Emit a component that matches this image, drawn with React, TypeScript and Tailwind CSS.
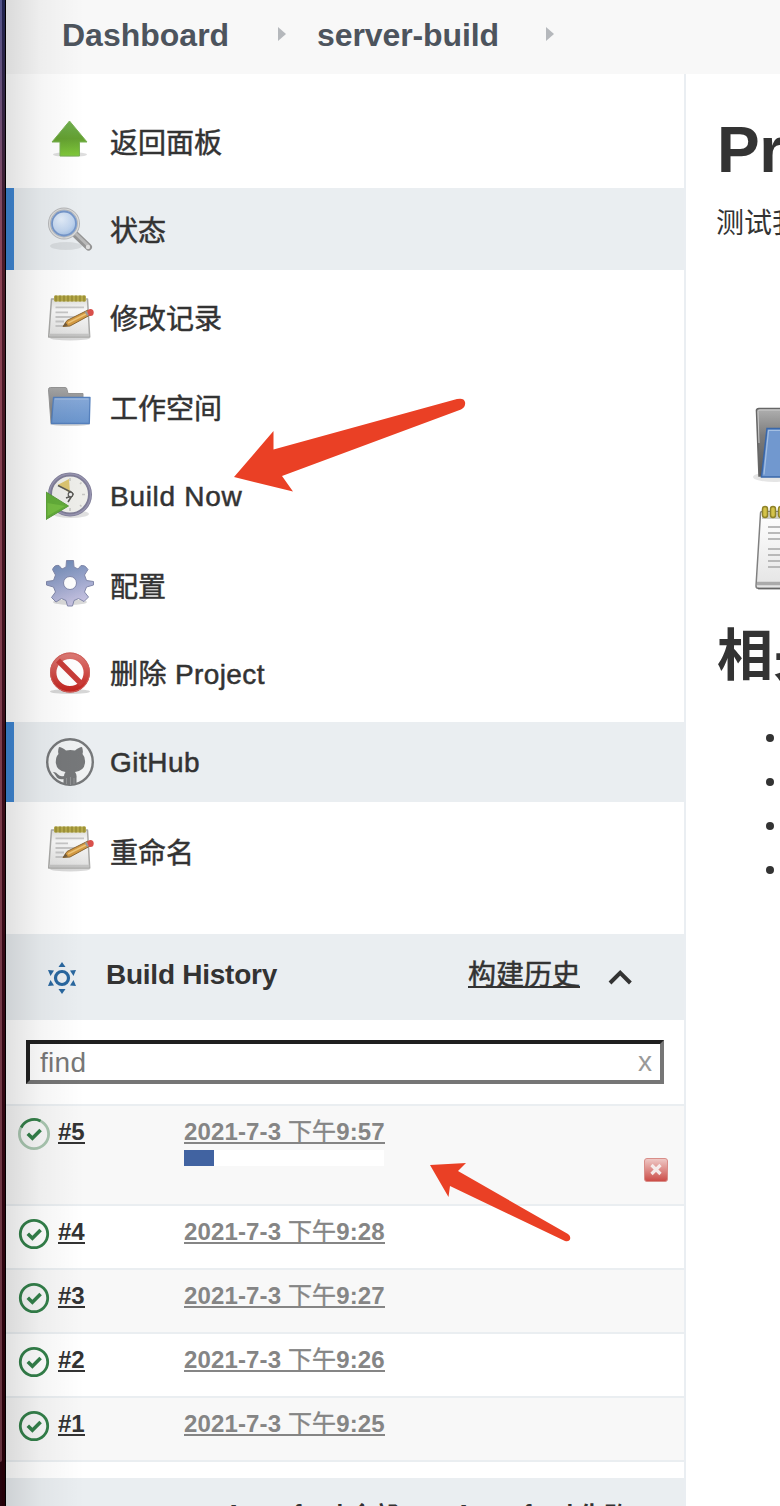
import React from "react";

const FONT = "font-['Liberation_Sans','Noto_Sans_CJK_SC',sans-serif]";

function UpArrow() {
  return (
    <svg width="48" height="48" viewBox="0 0 48 48">
      <defs>
        <linearGradient id="up" x1="0" y1="0" x2="0" y2="1">
          <stop offset="0" stopColor="#6fae50" />
          <stop offset="0.5" stopColor="#64a031" />
          <stop offset="1" stopColor="#80c93a" />
        </linearGradient>
      </defs>
      <ellipse cx="24" cy="38.500" rx="17" ry="2.6" fill="#000" opacity="0.13" />
      <path d="M23.500 5 L41 26 H33.500 V40 H14 V26 H6 Z" fill="url(#up)" stroke="#79b152" strokeWidth="1" strokeLinejoin="round" />
    </svg>
  );
}

function Search() {
  return (
    <svg width="48" height="48" viewBox="0 0 48 48">
      <defs>
        <radialGradient id="lens" cx="0.4" cy="0.35" r="0.7">
          <stop offset="0" stopColor="#e4eefa" />
          <stop offset="0.6" stopColor="#c0d4ee" />
          <stop offset="1" stopColor="#8fb2de" />
        </radialGradient>
      </defs>
      <ellipse cx="20" cy="41" rx="16" ry="4" fill="#000" opacity="0.08" />
      <path d="M30 30 L42.500 42" stroke="#949494" strokeWidth="7" strokeLinecap="round" />
      <path d="M30 29 L42 40.500" stroke="#b9b9b9" strokeWidth="3" strokeLinecap="round" />
      <circle cx="42" cy="42" r="2.200" fill="#ddd" />
      <circle cx="18" cy="18.500" r="14.500" fill="url(#lens)" stroke="#b4b5b7" strokeWidth="3" />
      <circle cx="18" cy="18.500" r="14.500" fill="none" stroke="#dcdddd" strokeWidth="1.200" />
      <circle cx="18" cy="18.500" r="12" fill="none" stroke="#7697ca" strokeWidth="1.800" />
    </svg>
  );
}

function Notepad() {
  return (
    <svg width="48" height="48" viewBox="0 0 48 48">
      <defs>
        <linearGradient id="pad" x1="0" y1="0" x2="0" y2="1">
          <stop offset="0" stopColor="#dededb" />
          <stop offset="0.3" stopColor="#f8f8f8" />
          <stop offset="1" stopColor="#dededd" />
        </linearGradient>
      </defs>
      <ellipse cx="24" cy="44" rx="20" ry="2.500" fill="#000" opacity="0.15" />
      <path d="M5.500 5 H41.500 L43.700 43 H2.700 Z" fill="url(#pad)" stroke="#a9a9a7" strokeWidth="1.500" strokeLinejoin="round" />
      <path d="M3.300 41 H43.300" stroke="#c4c4c3" strokeWidth="2.500" />
      <rect x="8" y="1.500" width="32" height="6" rx="1" fill="#b5a948" />
      <path d="M10 1.500 V7.500 M14 1.500 V7.500 M18 1.500 V7.500 M22 1.500 V7.500 M26 1.500 V7.500 M30 1.500 V7.500 M34 1.500 V7.500 M38 1.500 V7.500" stroke="#968a35" strokeWidth="1.500" />
      <path d="M9.500 13.300 H38 M9.500 18.300 H22 M9.500 23 H30 M9.500 27.500 H18 M9.500 32 H17" stroke="#c6c6c6" strokeWidth="1.800" />
      <path d="M17 32.500 L21 26.500 L42 16 L45 20.500 L24 32 Z" fill="#d49a42" stroke="#8a6634" strokeWidth="1" />
      <path d="M22 29 L43 18.500" stroke="#edc477" strokeWidth="1.500" />
      <path d="M17 32.500 L19.500 28.500 L22 31.500 Z" fill="#705c40" />
      <ellipse cx="44.500" cy="18.500" rx="3.200" ry="3.500" fill="#d9504b" />
      <path d="M39.500 17.500 L42 21.500" stroke="#999" strokeWidth="2" />
    </svg>
  );
}

function Folder() {
  return (
    <svg width="48" height="48" viewBox="0 0 48 48">
      <defs>
        <linearGradient id="folderBack" x1="0" y1="0" x2="0" y2="1">
          <stop offset="0" stopColor="#a7a7a7" />
          <stop offset="1" stopColor="#6b6d70" />
        </linearGradient>
        <linearGradient id="folderFront" x1="0" y1="0" x2="0" y2="1">
          <stop offset="0" stopColor="#86a8d7" />
          <stop offset="1" stopColor="#6a95cd" />
        </linearGradient>
      </defs>
      <ellipse cx="24" cy="41" rx="20" ry="2" fill="#000" opacity="0.15" />
      <path d="M2.500 6.500 Q2.500 4.500 4.500 4.500 H19 Q21 4.500 21 6.500 L22 10.500 H37 V40.500 H5 Z" fill="url(#folderBack)" stroke="#959595" strokeWidth="1" />
      <path d="M7.500 14.500 H44 L43.300 40.500 H5.500 Z" fill="url(#folderFront)" stroke="#5580bd" strokeWidth="1.300" strokeLinejoin="round" />
      <path d="M9 16 H42.500" stroke="#a7c0e3" strokeWidth="1" />
    </svg>
  );
}

function ClockPlay() {
  return (
    <svg width="48" height="48" viewBox="0 0 48 48">
      <ellipse cx="25" cy="42" rx="18" ry="4" fill="#000" opacity="0.12" />
      <circle cx="24" cy="22.500" r="20" fill="#eeeeea" stroke="#7f7d97" strokeWidth="4" />
      <circle cx="24" cy="22.500" r="20.500" fill="none" stroke="#9794b0" strokeWidth="1.300" />
      <path d="M24 21 L11.500 13 L23 7 Z" fill="#dcc571" />
      <path d="M12 13.500 L23 19 L25.500 24 L20 26 M24 19 L27 22 L22 30" fill="none" stroke="#5a5a56" strokeWidth="1.600" />
      <circle cx="24.500" cy="22.500" r="2.300" fill="#eee" stroke="#5a5a56" strokeWidth="1.200" />
      <path d="M24 6 V9 M39 22.500 H36 M24 39 V36 M34 12 L35.500 10.500 M34 33 L35.500 34.500" stroke="#c5c5c2" strokeWidth="1.500" />
      <path d="M0 20 L22.500 34 L0 47.500 Z" fill="#62ac39" stroke="#5a9c3c" strokeWidth="1" />
      <path d="M1.500 31 L19 34 L1.500 44 Z" fill="#74bd42" />
    </svg>
  );
}

function Gear() {
  return (
    <svg width="48" height="48" viewBox="0 0 48 48">
      <defs>
        <linearGradient id="gear" x1="0.3" y1="0" x2="0.6" y2="1">
          <stop offset="0" stopColor="#6f8ab5" />
          <stop offset="0.45" stopColor="#96a2c9" />
          <stop offset="1" stopColor="#cbc5e3" />
        </linearGradient>
      </defs>
      <ellipse cx="24" cy="42" rx="17" ry="3" fill="#000" opacity="0.15" />
      <path
        fill="url(#gear)"
        stroke="#8288aa"
        strokeWidth="1"
        fillRule="evenodd"
        strokeLinejoin="round"
        d="M20.500 0.500 H27.500 L28 7 L32 9 L35 5.500 Q39 4.500 42 9.500 L38.500 15 L40.500 20.500 L47.500 21.500 V25 L40.500 27 L38.500 32 L42.500 37 L38 41.500 L32.500 38.500 L28 40.500 L26.500 46 H21.500 L20 40.500 L15.500 38.500 L10 42 L5.500 37.500 L9.500 32 L7.500 27 L0.500 25 V21.500 L7.500 20.500 L9.500 15 L6.500 9.500 Q8.500 4.500 13 5.500 L16 9 L20 7 Z M24 16.500 A6.500 6.500 0 1 0 24 29.500 A6.500 6.500 0 1 0 24 16.500 Z"
      />
    </svg>
  );
}

function Forbidden() {
  return (
    <svg width="48" height="48" viewBox="0 0 48 48">
      <defs>
        <linearGradient id="ban" x1="0" y1="0" x2="0" y2="1">
          <stop offset="0" stopColor="#db7671" />
          <stop offset="1" stopColor="#c32722" />
        </linearGradient>
      </defs>
      <ellipse cx="24" cy="42.500" rx="20" ry="2.500" fill="#000" opacity="0.16" />
      <circle cx="24" cy="23.500" r="16.800" fill="#fff" stroke="url(#ban)" strokeWidth="6.400" />
      <path d="M12 11.500 L36 35.500" stroke="#c83c38" strokeWidth="5.500" />
      <circle cx="24" cy="23.500" r="19.500" fill="none" stroke="#cf615c" strokeWidth="1" />
    </svg>
  );
}

function Octocat() {
  return (
    <svg width="48" height="48" viewBox="0 0 48 48">
      <circle cx="24" cy="24" r="22.800" fill="#f0f2f3" stroke="#76787a" strokeWidth="2.400" />
      <path
        fill="#76787a"
        d="M13 9 Q16 9 20 12.500 Q24 11.500 29 12.500 Q33 9 36 9 Q37.500 13 36.500 16 Q39.500 19 39 25 Q38 33 29 34 Q31 36 30.500 40 V46 L24 47.500 L17.500 46 V41 Q12 42 10 38 Q8.500 35.500 7 34 Q10 33.500 12 36.500 Q14 39 18 38 Q18 36 19.500 34 Q11 33 9.800 25 Q9.500 19 12.500 16 Q11.500 13 13 9 Z"
      />
      <path d="M20.500 40 V46 M24.500 39 V47 M28 40 V46" stroke="#929496" strokeWidth="1" />
    </svg>
  );
}

function Sun() {
  return (
    <svg width="30" height="34" viewBox="0 0 30 34" className="mt-[2px]">
      <g fill="#29679f">
        <path d="M15 1 L18.500 6 H11.500 Z" />
        <path d="M15 33 L18.500 28 H11.500 Z" />
        <path d="M1 9 L7 9.500 L3.500 15 Z" />
        <path d="M29 9 L23 9.500 L26.500 15 Z" />
        <path d="M1 25 L7 24.500 L3.500 19 Z" />
        <path d="M29 25 L23 24.500 L26.500 19 Z" />
      </g>
      <circle cx="15" cy="17" r="6.500" fill="none" stroke="#29679f" strokeWidth="3.200" />
    </svg>
  );
}

function Status({ running }: { running?: boolean }) {
  return (
    <svg width="34" height="34" viewBox="0 0 34 34" className="shrink-0">
      {running ? (
        <>
          <circle cx="17" cy="17" r="14.600" fill="none" stroke="#a9c6b0" strokeWidth="2.800" />
          <path d="M4.200 10.500 A14.600 14.600 0 0 1 23.500 3.900" fill="none" stroke="#35804a" strokeWidth="2.800" />
        </>
      ) : (
        <circle cx="17" cy="17" r="13.700" fill="none" stroke="#33804a" strokeWidth="2.800" />
      )}
      <path d="M10.800 16.700 L15.400 21.200 L23.600 13" fill="none" stroke="#33804a" strokeWidth="3.600" />
    </svg>
  );
}

function Cancel() {
  return (
    <svg width="24" height="24" viewBox="0 0 24 24">
      <defs>
        <linearGradient id="cancel" x1="0" y1="0" x2="0" y2="1">
          <stop offset="0" stopColor="#efcbc8" />
          <stop offset="1" stopColor="#cb4a45" />
        </linearGradient>
      </defs>
      <rect x="0.500" y="0.500" width="23" height="23" rx="2.500" fill="url(#cancel)" stroke="#d98e89" />
      <path d="M7.500 7 L16.500 16 M16.500 7 L7.500 16" stroke="#f5ebea" strokeWidth="3.200" />
    </svg>
  );
}

function BigFolder() {
  return (
    <svg width="28" height="80" viewBox="0 0 28 80">
      <defs>
        <linearGradient id="bigBack" x1="0" y1="0" x2="0" y2="1">
          <stop offset="0" stopColor="#b0b0b0" />
          <stop offset="0.4" stopColor="#7c7c7c" />
          <stop offset="1" stopColor="#5a5a5a" />
        </linearGradient>
      </defs>
      <ellipse cx="22" cy="74" rx="21" ry="5" fill="#000" opacity="0.1" />
      <path d="M30 5.500 H7 Q4 5.500 4.500 8.500 L7 73 H30 Z" fill="url(#bigBack)" stroke="#666" strokeWidth="1.500" />
      <path d="M30 7 H8 Q6 7 6 8.500 L7 40" fill="none" stroke="#ccc" />
      <path d="M30 25.500 H15 L9.500 74 H30 Z" fill="#7198cf" stroke="#3967aa" strokeWidth="1.500" />
      <path d="M30 27.500 H16.500 L12 71.500" fill="none" stroke="#a4bfe2" strokeWidth="1.200" />
    </svg>
  );
}

function BigPad() {
  return (
    <svg width="28" height="90" viewBox="0 0 28 90">
      <defs>
        <linearGradient id="bigPad" x1="0" y1="0" x2="0" y2="1">
          <stop offset="0" stopColor="#fff" />
          <stop offset="1" stopColor="#e4e4e4" />
        </linearGradient>
      </defs>
      <path d="M30 8.500 H10 Q8.500 8.500 8.500 10.500 L4 83 Q4 85.500 7 85.500 H30 Z" fill="url(#bigPad)" stroke="#808080" strokeWidth="1.500" />
      <path d="M10 9.500 H30 V16 H10 Z" fill="#cdcdc5" />
      <path d="M5 80.500 H30" stroke="#aaa" strokeWidth="3.500" />
      <path d="M6 85.500 H30" stroke="#666" strokeWidth="1.500" />
      <g fill="#d5c34a" stroke="#8f8329" strokeWidth="1.500">
        <rect x="10.500" y="3.500" width="5" height="11" rx="2.500" />
        <rect x="18.500" y="3.500" width="5" height="11" rx="2.500" />
        <rect x="26.500" y="3.500" width="5" height="11" rx="2.500" />
      </g>
      <path d="M16 24 H30 M16 30 H30 M16 36 H30 M16 46 H30 M16 52 H30 M16 58 H30 M16 64 H30" stroke="#b9b9b9" strokeWidth="2" />
    </svg>
  );
}

type Item = { label: string; icon: React.ReactNode; active?: boolean; box: string; text: string };

const items: Item[] = [
  { label: "返回面板", icon: <UpArrow />, box: "h-[80px] mb-[8px]", text: "mt-[7px]" },
  { label: "状态", icon: <Search />, active: true, box: "h-[82px] mb-[8px]", text: "mt-[6px]" },
  { label: "修改记录", icon: <Notepad />, box: "h-[80px] mb-[9px]", text: "mt-[4px]" },
  { label: "工作空间", icon: <Folder />, box: "h-[80px] mb-[9px]", text: "mt-[5px]" },
  { label: "Build Now", icon: <ClockPlay />, box: "h-[80px] mb-[8px]", text: "mt-[1px] tracking-[0.7px]" },
  { label: "配置", icon: <Gear />, box: "h-[80px] mb-[9px]", text: "mt-[7px]" },
  { label: "删除 Project", icon: <Forbidden />, box: "h-[80px] mb-[9px]", text: "mt-[4px] tracking-[0.4px]" },
  { label: "GitHub", icon: <Octocat />, active: true, box: "h-[80px] mb-[7px]", text: "mt-[1px] tracking-[0.5px]" },
  { label: "重命名", icon: <Notepad />, box: "h-[80px]", text: "mt-[9px]" },
];

const builds = [
  { id: "#5", time: "9:57", running: true },
  { id: "#4", time: "9:28" },
  { id: "#3", time: "9:27" },
  { id: "#2", time: "9:26" },
  { id: "#1", time: "9:25" },
];

export default function App() {
  return (
    <div className={`relative flex h-[1506px] w-[780px] overflow-hidden bg-white text-[#333] ${FONT}`}>
      <div className="flex h-full w-[6px] shrink-0 bg-[#25030c]">
        <div className="h-[1462px] w-[2px] rounded-br-[2px] bg-linear-to-b from-[#51538a] via-[#8b4354] via-[18%] to-[#64323d]" />
        <div className="h-full w-[3px] bg-linear-to-b from-[#20234f] via-[#4b1a28] via-[18%] to-[#250008]" />
        <div className="h-full w-px bg-black" />
      </div>

      <div className="flex min-w-0 flex-1 flex-col">
        <header className="flex h-[74px] shrink-0 items-start bg-[#f8f8f8] pl-[56px] text-[32px] font-bold leading-[36px] text-[#4d545d]">
          <span className="mt-[17px] w-[216px]">Dashboard</span>
          <svg width="8" height="14" viewBox="0 0 8 14" className="mt-[27px] mr-[31px]"><path d="M0 0 L8 7 L0 14 Z" fill="#b5b8bc" /></svg>
          <span className="mt-[17px] w-[229px] tracking-[-0.1px]">server-build</span>
          <svg width="8" height="14" viewBox="0 0 8 14" className="mt-[27px]"><path d="M0 0 L8 7 L0 14 Z" fill="#b5b8bc" /></svg>
        </header>

        <div className="flex min-h-0 flex-1">
          <aside className="flex w-[680px] shrink-0 flex-col border-r-2 border-[#eaeef2]">
            <nav className="flex h-[860px] shrink-0 flex-col pt-[26px]">
              {items.map((it) => (
                <a
                  key={it.label}
                  className={`flex shrink-0 items-center border-l-8 pl-8 text-[28px] [-webkit-text-stroke:0.5px_#333] ${it.active ? "border-[#3f87d4] bg-[#eaeef1]" : "border-transparent"} ${it.box}`}
                >
                  {it.icon}
                  <span className={`ml-4 leading-[40px] whitespace-nowrap ${it.text}`}>{it.label}</span>
                </a>
              ))}
            </nav>

            <div className="flex h-[86px] shrink-0 items-center bg-[#eaeef1] pl-[41px] text-[28px]">
              <Sun />
              <span className="mb-[5px] ml-[29px] w-[362px] font-bold leading-[36px] tracking-[-0.25px]">Build History</span>
              <span className="mb-[4px] h-[26px] border-b-2 border-[#333] leading-[28px] [-webkit-text-stroke:0.5px_#333]">构建历史</span>
              <svg width="26" height="18" viewBox="0 0 26 18" className="ml-[27px] mt-[2px]">
                <path d="M3 14 L13.200 3.800 L23.400 14" fill="none" stroke="#333" strokeWidth="4" />
              </svg>
            </div>

            <div className="mt-5 ml-5 flex h-[44px] w-[638px] shrink-0 items-center justify-between border-4 border-t-[#202020] border-l-[#202020] border-r-[#767676] border-b-[#767676] pl-[10px] pr-[8px] text-[28px] text-[#777]">
              <span className="mt-[2px] leading-[32px] tracking-[0.3px]">find</span>
              <span className="text-[28px] leading-[30px] text-[#999]">x</span>
            </div>

            <ul className="mt-5 flex shrink-0 flex-col border-b-2 border-[#eaeef1]">
              {builds.map((b, i) => (
                <li
                  key={b.id}
                  className={`flex items-start border-t-2 border-[#eaeef1] pl-[11px] text-[24px] font-bold leading-[28px] ${b.running ? "h-[100px]" : "h-[64px]"} ${i % 2 === 0 ? "bg-[#f8f8f8]" : "bg-white"}`}
                >
                  <span className="mt-[11px] h-[34px]"><Status running={b.running} /></span>
                  <span className="mt-[12px] ml-[7px] flex w-[126px] items-start">
                    <span className="h-[26px] border-b-2 border-[#333]">{b.id}</span>
                  </span>
                  <span className="mt-[12px] flex w-[460px] flex-col items-start text-[#858585]">
                    <span className="h-[26px] whitespace-nowrap border-b-2 border-[#858585] tracking-[0.13px]">
                      2021-7-3 <span className="font-normal [-webkit-text-stroke:0.4px_#858585]">下午</span>{b.time}
                    </span>
                    {b.running && (
                      <span className="mt-[6px] flex h-4 w-[200px] bg-white">
                        <span className="h-4 w-[30px] bg-[#4163a1]" />
                      </span>
                    )}
                  </span>
                  {b.running && <span className="mt-[52px]"><Cancel /></span>}
                </li>
              ))}
            </ul>

            <div className="mt-4 flex h-[28px] shrink-0 items-start bg-[#eaeef1] pl-[219px] pt-[20px] text-[24px] font-bold leading-[32px] text-[#333]">
              <span className="flex w-[230px] whitespace-pre tracking-[0.1px]">
                <span>Atom feed </span>
                <span className="mt-[2px]">全部</span>
              </span>
              <span className="flex whitespace-pre tracking-[0.1px]">
                <span>Atom feed </span>
                <span className="mt-[2px]">失败</span>
              </span>
            </div>
          </aside>

          <main className="flex min-w-0 flex-1 flex-col overflow-hidden">
            <h1 className="mt-[40px] ml-[31px] text-[64px] font-bold leading-[72px] whitespace-nowrap tracking-[-0.5px]">Project server-build</h1>
            <p className="mt-[18px] ml-[30px] text-[28px] leading-[40px] whitespace-nowrap">测试我的项目</p>
            <div className="mt-[159px] ml-[66px]"><BigFolder /></div>
            <div className="mt-[20px] ml-[66px]"><BigPad /></div>
            <h2 className="mt-[27px] ml-[31px] text-[56px] font-bold leading-[72px] whitespace-nowrap">相关链接</h2>
            <ul className="mt-[42px] ml-[80px] flex flex-col gap-9">
              {[0, 1, 2, 3].map((n) => <li key={n} className="size-2 rounded-full bg-[#333]" />)}
            </ul>
          </main>
        </div>
      </div>

      <div className="pointer-events-none absolute top-0 left-[6px] h-full w-[78px] bg-linear-to-r from-black/12 via-black/4 via-45% to-transparent" />
      <svg className="pointer-events-none absolute top-0 left-0" width="780" height="1506" viewBox="0 0 780 1506">
        <path d="M234 477 L273.500 431 L273.500 449.500 L457 399 Q464 397.500 465 402 Q466 407 461 409.500 L282 476 L293 491.500 Z" fill="#ea4025" />
        <path d="M430 1165 L466 1163 L458 1171 L568 1234 Q571 1236 570 1239.500 Q569 1242 565 1241 L450 1186 L448.500 1197 Z" fill="#ea4025" />
      </svg>
    </div>
  );
}
